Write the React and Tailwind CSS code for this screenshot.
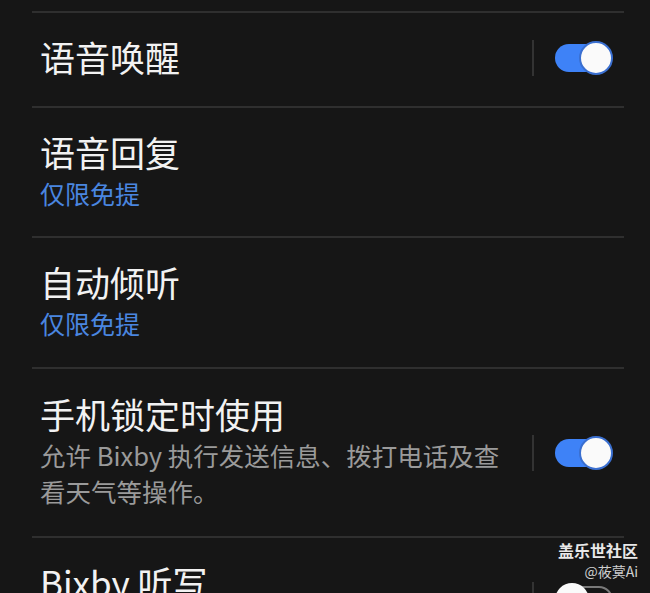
import React from 'react';

const font = { fontFamily: '"Noto Sans CJK SC", "Noto Sans", sans-serif' };

function Divider() {
  return <div className="h-[2px] bg-[#2f2f2f]" />;
}

function Toggle({ on }) {
  if (on) {
    return (
      <div className="relative h-[28px] w-[58px]">
        <div className="absolute left-0 top-0 h-[28px] w-[52px] rounded-full bg-[#3e82f7]" />
        <div className="absolute right-0 top-[-3px] h-[34px] w-[34px] rounded-full bg-[#fafafa] border-[2px] border-[#3a6fd0]" />
      </div>
    );
  }
  return (
    <div className="relative h-[28px] w-[58px]">
      <div className="absolute left-[4px] top-0 h-[28px] w-[54px] rounded-full border-[2px] border-[#7a7a7a]" />
      <div className="absolute left-0 top-[-3px] h-[34px] w-[34px] rounded-full bg-[#fafafa]" />
    </div>
  );
}

function SwitchArea({ on }) {
  return (
    <div className="flex items-center">
      <div className="h-[36px] w-[2px] bg-[#333333]" />
      <div className="ml-[21px]">
        <Toggle on={on} />
      </div>
    </div>
  );
}

export default function App() {
  return (
    <div className="relative h-[593px] w-[650px] overflow-hidden bg-[#161616] text-[#f2f2f2]" style={font}>
      <div className="pl-[32px] pr-[26px] pt-[11px]">
        <Divider />

        {/* 语音唤醒 */}
        <div className="flex h-[93px] items-center justify-between pb-[5px] pl-[8px] pr-[11px]">
          <div className="text-[35px] leading-[44px]">语音唤醒</div>
          <div className="pt-[1px]">
            <SwitchArea on />
          </div>
        </div>
        <Divider />

        {/* 语音回复 */}
        <div className="h-[128px] pl-[8px] pt-[22px]">
          <div className="text-[35px] leading-[44px]">语音回复</div>
          <div className="mt-[1px] text-[25px] leading-[36px] text-[#4a86e0]">仅限免提</div>
        </div>
        <Divider />

        {/* 自动倾听 */}
        <div className="h-[129px] pl-[8px] pt-[22px]">
          <div className="text-[35px] leading-[44px]">自动倾听</div>
          <div className="mt-[1px] text-[25px] leading-[36px] text-[#4a86e0]">仅限免提</div>
        </div>
        <Divider />

        {/* 手机锁定时使用 */}
        <div className="flex h-[167px] items-center justify-between pl-[8px] pr-[11px]">
          <div className="w-[475px] pb-[4px]">
            <div className="text-[35px] leading-[44px]">手机锁定时使用</div>
            <div className="mt-[1px] text-[25.5px] leading-[36px] text-[#9a9a9a]">
              允许 Bixby 执行发送信息、拨打电话及查看天气等操作。
            </div>
          </div>
          <SwitchArea on />
        </div>
        <Divider />

        {/* Bixby 听写 */}
        <div className="flex items-start justify-between pl-[8px] pr-[11px] pt-[22px]">
          <div className="text-[35px] leading-[44px]">Bixby 听写</div>
          <div className="pt-[22px]">
            <SwitchArea on={false} />
          </div>
        </div>
      </div>

      <div className="absolute right-[12px] top-[540px] flex flex-col items-end">
        <div className="text-[16px] font-bold leading-[21px] text-[#e8e8e8]">盖乐世社区</div>
        <div className="text-[14px] leading-[20px] text-[#cfcfcf]">@莜蓂Ai</div>
      </div>
    </div>
  );
}
